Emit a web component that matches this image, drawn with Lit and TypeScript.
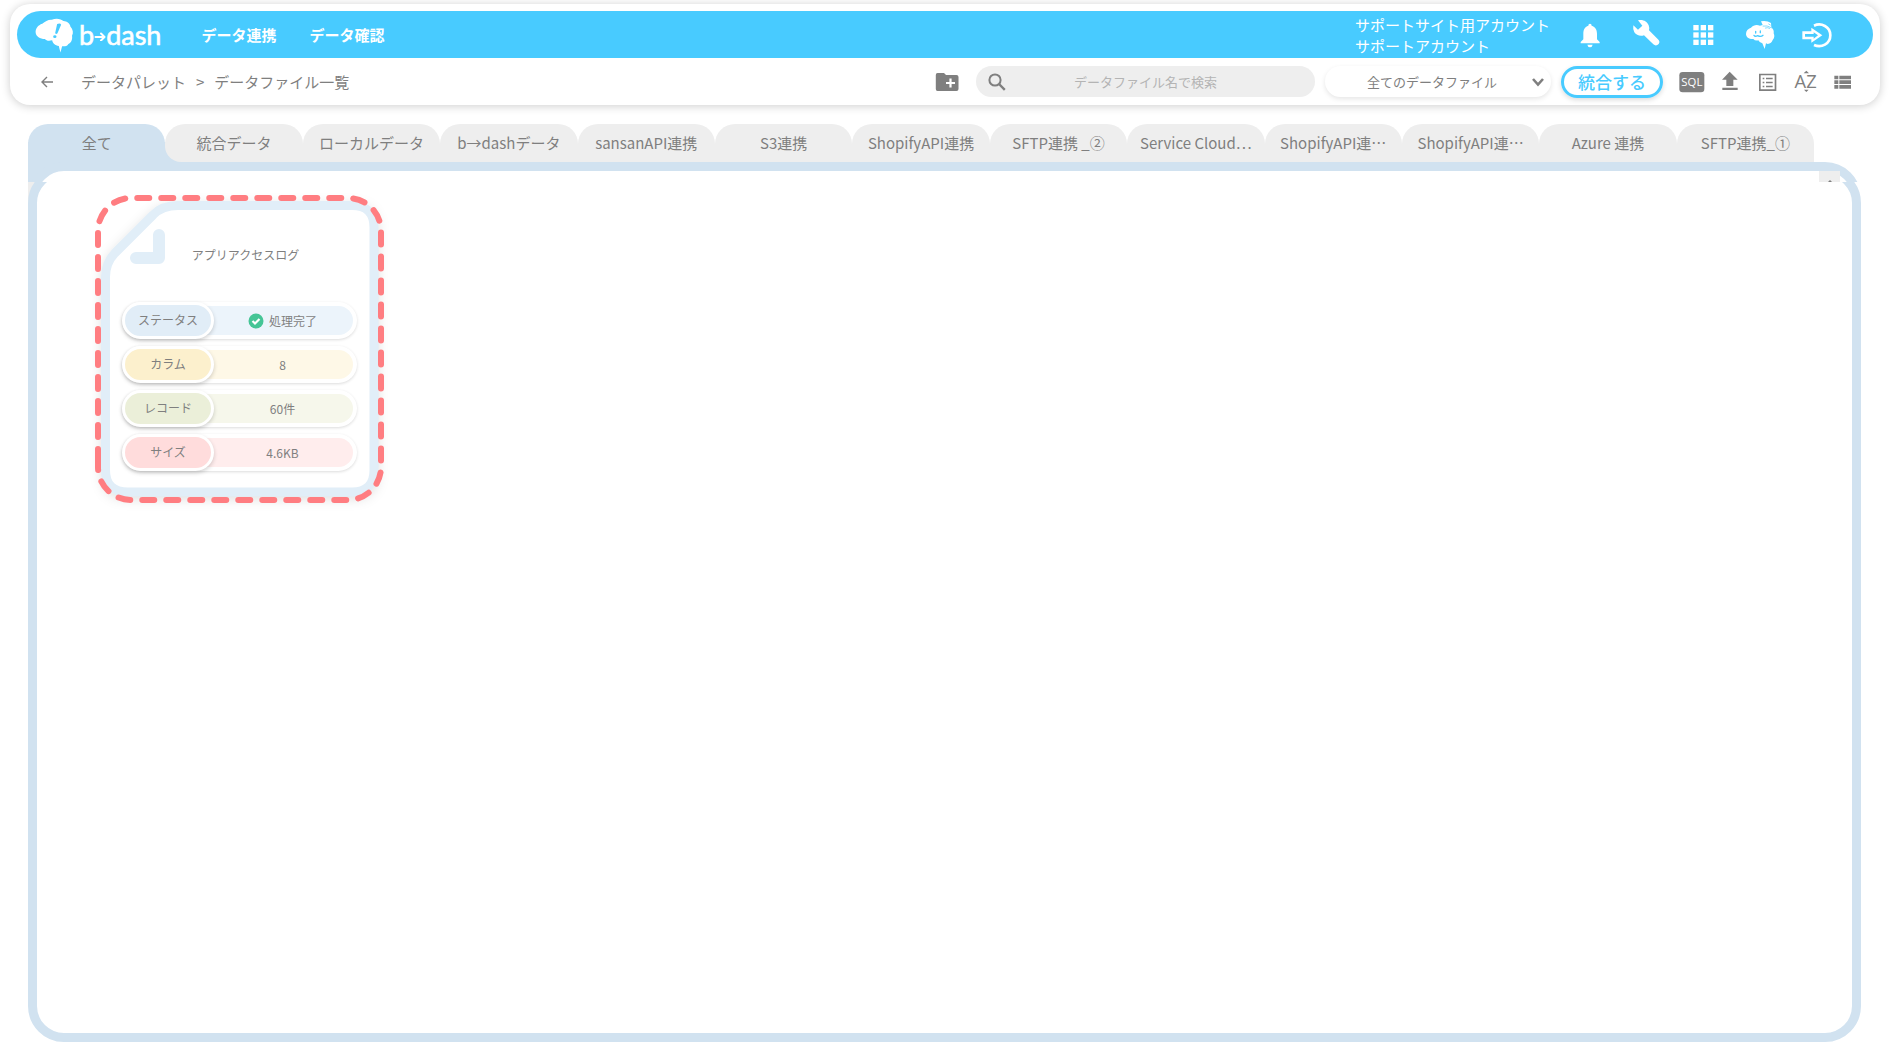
import { LitElement, html, css, svg } from "lit";
import { customElement, property, state } from "lit/decorators.js";
import { classMap } from "lit/directives/class-map.js";

const base = css`
  *,
  *::before,
  *::after {
    box-sizing: border-box;
  }
  button,
  input,
  select {
    font: inherit;
    color: inherit;
    border: 0;
    margin: 0;
    padding: 0;
    background: none;
  }
  button,
  select {
    cursor: pointer;
  }
  a {
    color: inherit;
    text-decoration: none;
  }
  svg {
    display: block;
  }
`;

const cloud = "M107 99C106 87 114 76 127 72C136 65 145 59 156 60C167 54 184 56 191 64C202 65 211 72 212 80C220 89 222 99 217 108C219 120 214 130 206 133C202 140 194 141 187 140L182 159L177 139C166 138 158 131 157 122C146 125 139 123 135 118C120 118 108 110 107 99Z";

@customElement("app-header")
export class AppHeader extends LitElement {
  static styles = [
    base,
    css`
      :host {
        display: block;
        background: #fff;
        border-radius: 20px;
        padding: 7px 7px 0;
        box-shadow: 0 1px 10px rgba(0, 0, 0, 0.2);
      }
      .bar {
        display: flex;
        align-items: center;
        height: 47px;
        padding: 0 40px 0 18px;
        border-radius: 24px;
        background: #48cbff;
        color: #fff;
      }
      .logo {
        display: flex;
        align-items: center;
        font: 27px/40px Lato, sans-serif;
        -webkit-text-stroke: 0.6px #fff;
      }
      .mark {
        margin-right: 5px;
      }
      .nav {
        display: flex;
        gap: 33px;
        margin-left: 40px;
        font-weight: 700;
      }
      .account {
        margin-left: auto;
        margin-right: 25px;
        line-height: 21px;
      }
      .icons {
        display: flex;
        gap: 27px;
      }
      .tools {
        display: flex;
        align-items: center;
        height: 47px;
        padding: 0 16px 0 23px;
      }
      .back {
        margin-right: 27px;
      }
      .crumbs {
        display: flex;
        gap: 10px;
      }
      .folder {
        margin-left: auto;
        margin-right: 17px;
      }
      .search {
        display: grid;
        align-items: center;
        flex: 0 1 339px;
        height: 31px;
        margin-right: 10px;
        border-radius: 16px;
        background: #eee;
      }
      .search > * {
        grid-area: 1 / 1;
      }
      .glass {
        margin-left: 12px;
      }
      .query {
        width: 100%;
        height: 31px;
        padding: 0 40px;
        font-size: 13px;
        text-align: center;
        outline-offset: -2px;
      }
      .query::placeholder {
        color: #b4b4b4;
        opacity: 1;
      }
      .filter {
        display: grid;
        align-items: center;
        flex: 0 1 226px;
        height: 31px;
        margin-right: 10px;
        border-radius: 16px;
        box-shadow: 0 2px 5px rgba(0, 0, 0, 0.1);
      }
      .filter > * {
        grid-area: 1 / 1;
      }
      .choice {
        appearance: none;
        width: 100%;
        height: 31px;
        padding: 0 24px 0 12px;
        border-radius: 16px;
        font-size: 13px;
        text-align: center;
        text-align-last: center;
      }
      .chevron {
        justify-self: end;
        margin-right: 6px;
        pointer-events: none;
      }
      .merge {
        width: 102px;
        height: 32px;
        margin-right: 16px;
        border: 3px solid #48cbff;
        border-radius: 16px;
        color: #48cbff;
        font-size: 17px;
        font-weight: 500;
        line-height: 24px;
        box-shadow: 0 2px 5px rgba(0, 0, 0, 0.14);
      }
      .actions {
        display: flex;
        gap: 12px;
      }
      .glyph {
        overflow: visible;
      }
      .caption {
        font-family: "Open Sans", sans-serif;
      }
    `,
  ];

  private headerIcon(label: string, x: number, shape: unknown) {
    return html`<button aria-label=${label}>
      <svg class="glyph" width="30" height="30" viewBox="${x} 60 90 90" fill="#fff">${shape}</svg>
    </button>`;
  }

  private toolIcon(label: string, x: number, shape: unknown) {
    return html`<button aria-label=${label}>
      <svg class="glyph" width="26" height="26" viewBox="${x} 207 78 78" fill="#7f7f7f">${shape}</svg>
    </button>`;
  }

  render() {
    return html`
      <header class="bar">
        <a class="logo" href="#home" aria-label="b→dash">
          <svg class="mark" width="39" height="36" viewBox="105 52 118 108">
            <path fill="#fff" d=${cloud} />
            <path fill="#48cbff" d="M172 73Q181 68 184 75L173 101Q168 105 166 100Z" />
            <ellipse cx="165" cy="111" rx="5" ry="4" fill="#48cbff" />
          </svg>
          <span>b</span>
          <svg width="12" height="12" viewBox="0 0 12 12" fill="none" stroke="#fff" stroke-width="2" stroke-linecap="round" stroke-linejoin="round">
            <path d="M1.5 8H10M7 4.5L10.5 8L7 11.5" />
          </svg>
          <span>dash</span>
        </a>
        <nav class="nav">
          <a href="#link">データ連携</a>
          <a href="#check">データ確認</a>
        </nav>
        <div class="account">
          <div>サポートサイト用アカウント</div>
          <div>サポートアカウント</div>
        </div>
        <div class="icons">
          ${this.headerIcon("お知らせ", 74, svg`
            <path d="M119 71Q124 71 124 77C135 80 140 90 140 101V118L148 126V130H91V126L99 118V101C99 90 103 80 114 77Q114 71 119 71Z" />
            <path d="M111 134H127Q125 142 119 142Q113 142 111 134Z" />`)}
          ${this.headerIcon("設定", 245, svg`
            <path d="M263 61C277 57 291 64 295 76Q298 84 296 91L325 120Q330 126 325 132L321 135Q315 138 309 133L281 106C270 110 258 106 252 97Q247 88 249 76L263 89L276 77Z" />`)}
          ${this.headerIcon("アプリ一覧", 416, [75, 97, 119].map((y) => [429, 451, 473].map((x) => svg`<rect x=${x} y=${y} width="16" height="16" />`)))}
          ${this.headerIcon("サポート", 587, svg`
            <path d="M587 102C587 92 593 86 602 83C609 75 619 73 629 77L637 75L632 64Q650 61 662 69L663 82Q672 90 670 100Q675 111 667 120Q664 131 652 132L647 130L643 147L636 130Q628 129 624 121Q614 123 609 117C597 118 587 112 587 102Z" />
            <g fill="none" stroke="#48cbff" stroke-width="4" stroke-linecap="round">
              <path d="M616 94V99M630 93V98M611 106Q614 111 622 107Q632 112 638 106" />
              <path stroke-width="2" d="M638 78Q650 75 663 83M645 84Q652 81 658 85M655 72L660 75" />
            </g>`)}
          ${this.headerIcon("ログアウト", 758, svg`
            <path fill-rule="evenodd" d="M756 94H783V83L816 106L783 128V118H756ZM764 102V110H790V116L803 106L790 97V102Z" />
            <path fill="none" stroke="#fff" stroke-width="8" d="M791 77C813 67 840 80 840 106C840 132 813 145 791 135" />`)}
        </div>
      </header>
      <div class="tools">
        <button class="back" aria-label="戻る">
          <svg width="14" height="14" viewBox="0 0 14 14" fill="none" stroke="#7f7f7f" stroke-width="1.4">
            <path d="M13 7H2M7 2L2 7L7 12" />
          </svg>
        </button>
        <nav class="crumbs">
          <a href="#palette">データパレット</a>
          <span>&gt;</span>
          <span>データファイル一覧</span>
        </nav>
        <button class="folder" aria-label="フォルダを追加">
          <svg width="24" height="20" viewBox="0 0 24 20">
            <path fill="#7f7f7f" d="M2.500 1H9L11 3H21.500Q23.500 3 23.500 5V17Q23.500 19 21.500 19H2.500Q.8 19 .8 17V3Q.8 1 2.500 1Z" />
            <path stroke="#fff" stroke-width="2.200" d="M15.500 6.500V15.500M11 11H20" />
          </svg>
        </button>
        <label class="search">
          <svg class="glass" width="18" height="18" viewBox="0 0 18 18" fill="none" stroke="#7f7f7f">
            <circle cx="7" cy="7" r="5.600" stroke-width="2" />
            <path stroke-width="2.400" d="M11 11L16.800 16.800" />
          </svg>
          <input class="query" type="text" aria-label="データファイル名で検索" placeholder="データファイル名で検索" />
        </label>
        <label class="filter">
          <select class="choice" aria-label="表示するデータファイル">
            <option>全てのデータファイル</option>
          </select>
          <svg class="chevron" width="14" height="10" viewBox="0 0 14 10" fill="none" stroke="#7f7f7f" stroke-width="2.600">
            <path d="M2 2L7 7.500L12 2" />
          </svg>
        </label>
        <button class="merge">統合する</button>
        <div class="actions">
          ${this.toolIcon("SQL", 386, svg`
            <rect x="387" y="216" width="75" height="61" rx="10" />
            <text class="caption" x="424.500" y="259" font-size="34" font-weight="500" fill="#fff" text-anchor="middle">SQL</text>`)}
          ${this.toolIcon("アップロード", 500, svg`
            <path d="M538 215L562 239H549V258H528V239H515ZM516 263H562V270H516Z" />`)}
          ${this.toolIcon("ログ", 614, svg`
            <path fill-rule="evenodd" d="M626 221H678V273H626ZM631 226V268H673V226Z" />
            <path d="M637 233H642V238H637ZM637 245H642V250H637ZM637 257H642V262H637ZM647 233H667V238H647ZM647 245H667V250H647ZM647 257H667V262H647Z" />`)}
          ${this.toolIcon("並び替え", 728, svg`
            <text class="caption" x="766" y="263" font-size="55" text-anchor="middle">AZ</text>
            <path d="M760 220L768 212L776 220ZM761 269H775L768 276Z" />`)}
          ${this.toolIcon("リスト表示", 842, svg`
            <path d="M852 227H864V238H852ZM852 241H864V252H852ZM852 255H864V266H852ZM867 227H902V238H867ZM867 241H902V252H867ZM867 255H902V266H867Z" />`)}
        </div>
      </div>
    `;
  }
}

@customElement("file-card")
export class FileCard extends LitElement {
  @property() name = "";
  @property({ attribute: false }) rows: { label: string; value: string; tone: string; done?: boolean }[] = [];

  static styles = [
    base,
    css`
      :host {
        display: block;
        position: relative;
        width: 290px;
        padding: 0 28px 29px 27px;
        font-size: 12px;
        line-height: 18px;
      }
      .sheet {
        position: absolute;
        inset: 0;
        overflow: visible;
        filter: drop-shadow(0 3px 6px rgba(0, 0, 0, 0.12));
      }
      .focus {
        position: absolute;
        inset: 0;
        overflow: visible;
      }
      .content {
        position: relative;
      }
      .name {
        margin: 0;
        padding: 51px 0 38px 12px;
        font-size: 12px;
        font-weight: 400;
        text-align: center;
      }
      .facts {
        display: grid;
        gap: 7px;
        margin: 0;
      }
      .fact {
        display: flex;
        align-items: stretch;
        height: 37px;
        border: 4px solid #fff;
        border-left: 0;
        border-radius: 19px;
        box-shadow: 0 1px 3px rgba(0, 0, 0, 0.14);
      }
      .label {
        flex: 0 0 92px;
        margin: -4px 0;
        border: 3px solid #fff;
        border-radius: 19px;
        line-height: 30px;
        text-align: center;
        box-shadow: 0 2px 4px rgba(0, 0, 0, 0.18);
      }
      .value {
        display: flex;
        align-items: center;
        justify-content: center;
        gap: 5px;
        flex: 1;
        margin: 0;
        padding-right: 2px;
        line-height: 29px;
      }
      .blue { background: #ecf4fb; }
      .blue .label { background: #e1edf7; }
      .yellow { background: #fef8e7; }
      .yellow .label { background: #fcf0cd; }
      .green { background: #f6f7eb; }
      .green .label { background: #ebefd9; }
      .red { background: #ffeded; }
      .red .label { background: #ffdcdc; }
    `,
  ];

  render() {
    return html`
      <svg class="sheet" width="290" height="308" viewBox="0 0 290 308">
        <path fill="#fff" stroke="#e1eef8" stroke-width="9" d="M83 10.500H257Q279 10.500 279 32.500V275Q279 297 257 297H33Q10.500 297 10.500 275V82Q10.500 68 20 58L58 20Q67 10.500 83 10.500Z" />
        <path fill="none" stroke="#e1eef8" stroke-width="12" stroke-linecap="round" stroke-linejoin="round" d="M64 40V63H41" />
      </svg>
      <svg class="focus" width="290" height="308" viewBox="0 0 290 308">
        <path fill="none" stroke="#ff7d81" stroke-width="6" stroke-linecap="round" stroke-dasharray="12 12" d="M3 266V36A33 33 0 0 1 36 3H253A33 33 0 0 1 286 36V272A33 33 0 0 1 253 305H36A33 33 0 0 1 3 272Z" />
      </svg>
      <article class="content">
        <h2 class="name">${this.name}</h2>
        <dl class="facts">
          ${this.rows.map(
            (r) => html`<div class="fact ${r.tone}">
              <dt class="label">${r.label}</dt>
              <dd class="value">
                ${r.done
                  ? html`<svg width="16" height="16" viewBox="0 0 16 16">
                      <circle cx="8" cy="8" r="7.500" fill="#45c596" />
                      <path fill="none" stroke="#fff" stroke-width="2.200" d="M4.500 8L7 10.500L11.500 6" />
                    </svg>`
                  : ""}
                <span>${r.value}</span>
              </dd>
            </div>`,
          )}
        </dl>
      </article>
    `;
  }
}

@customElement("app-root")
export class AppRoot extends LitElement {
  @state() private active = 0;

  private tabs = [
    "全て", "統合データ", "ローカルデータ", "b→dashデータ", "sansanAPI連携", "S3連携", "ShopifyAPI連携",
    "SFTP連携 _②", "Service Cloud⋯", "ShopifyAPI連⋯", "ShopifyAPI連⋯", "Azure 連携", "SFTP連携_①",
  ];

  private rows = [
    { label: "ステータス", value: "処理完了", tone: "blue", done: true },
    { label: "カラム", value: "8", tone: "yellow" },
    { label: "レコード", value: "60件", tone: "green" },
    { label: "サイズ", value: "4.6KB", tone: "red" },
  ];

  static styles = [
    base,
    css`
      :host {
        display: flex;
        flex-direction: column;
        box-sizing: border-box;
        min-height: 100vh;
        padding: 4px 10px 21px;
        background: #fff;
        color: #7f7f7f;
        font: 15px/22px "Noto Sans CJK JP", sans-serif;
      }
      .page {
        display: flex;
        flex-direction: column;
        flex: 1;
        margin: 19px 19px 0 18px;
      }
      .tabs {
        display: flex;
        padding-right: 47px;
        background: linear-gradient(#d1e2f0, #d1e2f0) left bottom / 160px 20px no-repeat;
      }
      .tab {
        flex: 1 1 0;
        min-width: 0;
        height: 38px;
        border-radius: 20px 20px 0 0;
        background: #eee;
        white-space: nowrap;
      }
      .tab:nth-child(2) {
        border-bottom-left-radius: 16px;
      }
      .current {
        background: #d1e2f0;
      }
      .cap {
        height: 20px;
        overflow: hidden;
        background: linear-gradient(#d1e2f0, #d1e2f0) left top / 40px 20px no-repeat;
      }
      .edge {
        display: flex;
        justify-content: flex-end;
        height: 90px;
        padding-right: 12px;
        border: 9px solid #d1e2f0;
        border-radius: 36px;
        background: #fff;
      }
      .scroll {
        display: flex;
        justify-content: center;
        width: 21px;
        height: 11px;
        padding-top: 9px;
        background: #eee;
      }
      .body {
        display: flex;
        flex: 1;
        overflow: hidden;
        background: linear-gradient(#eee, #eee) left top / 12px 24px no-repeat;
      }
      .frame {
        flex: 1;
        margin-top: -15px;
        padding: 19px 58px;
        border: 9px solid #d1e2f0;
        border-radius: 36px;
        background: #fff;
      }
    `,
  ];

  render() {
    return html`
      <app-header></app-header>
      <main class="page">
        <div class="tabs" role="tablist">
          ${this.tabs.map(
            (t, i) => html`<button
              role="tab"
              aria-selected=${i === this.active}
              class=${classMap({ tab: true, current: i === this.active })}
              @click=${() => (this.active = i)}
            >${t}</button>`,
          )}
        </div>
        <div class="cap">
          <div class="edge">
            <div class="scroll">
              <svg width="6" height="3" viewBox="0 0 6 3"><path fill="#7f7f7f" d="M3 0L6 3H0Z" /></svg>
            </div>
          </div>
        </div>
        <section class="body" role="tabpanel">
          <div class="frame">
            <file-card name="アプリアクセスログ" .rows=${this.rows}></file-card>
          </div>
        </section>
      </main>
    `;
  }
}
